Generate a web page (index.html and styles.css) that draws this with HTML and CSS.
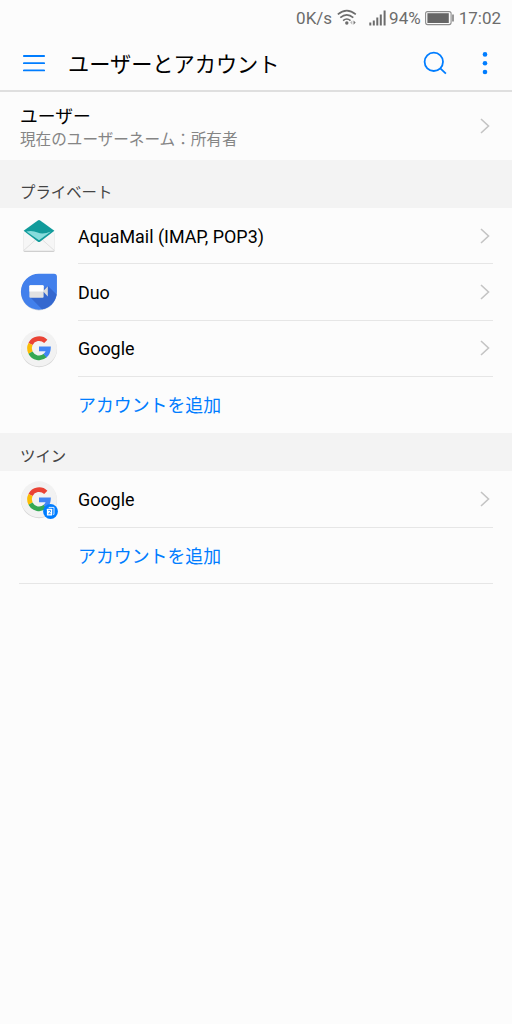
FILE: index.html
```html
<!DOCTYPE html>
<html lang="ja">
<head>
    <meta charset="UTF-8">
    <meta name="viewport" content="width=device-width, initial-scale=1.0">
    <title>ユーザーとアカウント</title>
    <link rel="stylesheet" href="styles.css">
</head>
<body>
    <!-- shared shapes -->
    <svg width="0" height="0" class="defs">
        <symbol id="chevron" viewBox="0 0 12 18">
            <path d="M2 2l7.5 7L2 16" fill="none" stroke="#c4c4c4" stroke-width="1.6"/>
        </symbol>
        <symbol id="google" viewBox="0 0 40 40">
            <circle cx="20" cy="20.2" r="18" fill="#d6d6d6"/>
            <circle cx="20" cy="19.3" r="18" fill="#f2f2f2"/>
            <g fill="none" stroke-width="4.6">
                <path d="M26.8 12.4A9.6 9.6 0 0 0 11.5 15" stroke="#ea4335"/>
                <path d="M11.5 15A9.6 9.6 0 0 0 11.5 23.6" stroke="#fbbc05"/>
                <path d="M11.5 23.6A9.6 9.6 0 0 0 26.3 26.5" stroke="#34a853"/>
                <path d="M26 26.7A9.6 9.6 0 0 0 29.4 19.9H20" stroke="#4285f4"/>
            </g>
        </symbol>
    </svg>

    <div class="status">
        <span class="speed">0K/s</span>
        <svg class="wifi" width="22" height="18" viewBox="0 0 22 18">
            <g fill="none" stroke="#6c6c6c" stroke-width="1.6">
                <path d="M.8 5.4Q9.8-2.2 18.8 5.4"/>
                <path d="M3.3 8.6Q9.8 3 16.3 8.6"/>
                <path d="M6.1 11.6Q9.8 8.4 13.5 11.6"/>
            </g>
            <circle cx="9.8" cy="14" r="1.7" fill="#6c6c6c"/>
            <path d="M15.3 11.4v4.4l-2.2-2.2z" fill="#bbb"/>
            <path d="M16.5 11.4v4.4l2.2-2.2z" fill="#777"/>
        </svg>
        <svg class="signal" width="18" height="17" viewBox="0 0 18 17">
            <path d="M1.3 12.5v3M4.8 10.5v5M8.3 7.5v8M11.8 4.5v11M15.6 .5v15" stroke="#6c6c6c" stroke-width="2"/>
        </svg>
        <span class="percent">94%</span>
        <svg class="battery" width="29" height="15" viewBox="0 0 29 15">
            <rect x=".6" y=".6" width="25.5" height="13" rx="2" fill="none" stroke="#8c8c8c" stroke-width="1.1"/>
            <rect x="2.4" y="2.2" width="21.4" height="9.8" fill="#666"/>
            <path d="M28 3.6v7" stroke="#777" stroke-width="1.5"/>
        </svg>
        <span class="time">17:02</span>
    </div>

    <header class="appbar">
        <svg class="menu" width="22" height="18" viewBox="0 0 22 18">
            <path d="M.8 2h20.4M.8 9.2h20.4M.8 16.4h20.4" stroke="#007dff" stroke-width="1.8" stroke-linecap="round"/>
        </svg>
        <h1>ユーザーとアカウント</h1>
        <svg class="search" width="24" height="24" viewBox="0 0 24 24">
            <g fill="none" stroke="#007dff" stroke-width="1.8">
                <circle cx="10.8" cy="10.8" r="9.2"/>
                <path d="M17.3 17.3l5.6 5.4"/>
            </g>
        </svg>
        <svg class="more" width="6" height="24" viewBox="0 0 6 24">
            <g fill="#007dff">
                <circle cx="3" cy="3.4" r="2.3"/>
                <circle cx="3" cy="12.2" r="2.3"/>
                <circle cx="3" cy="21" r="2.3"/>
            </g>
        </svg>
    </header>

    <main>
        <div class="user">
            <div class="user-text">
                <p class="user-title">ユーザー</p>
                <p class="user-sub">現在のユーザーネーム：所有者</p>
            </div>
            <svg class="chevron"><use href="#chevron"/></svg>
        </div>

        <h2 class="private">プライベート</h2>
        <ul>
            <li>
                <svg class="icon" viewBox="0 0 40 40">
                    <path d="M4.4 17h31.2v17.4q0 1.6-1.6 1.6H6q-1.6 0-1.6-1.6z" fill="#cfcfcf"/>
                    <path d="M4.4 15.2h31.2v18q0 1.6-1.6 1.6H6q-1.6 0-1.6-1.6z" fill="#f6f6f6"/>
                    <path d="M5 34.2L16.6 23.8M35 34.2L23.4 23.8" stroke="#dcdcdc" stroke-width=".9"/>
                    <path d="M4.6 14.7L18.8 4.4q1.2-.8 2.4 0l14.2 10.3L21.4 25.4q-1.4 1-2.8 0z" fill="#119b9b"/>
                    <path d="M7.4 15.6q6-1.4 11.2 1t13.4-1L20 24.2z" fill="#86dcdc"/>
                </svg>
                <div class="line"><span>AquaMail (IMAP, POP3)</span><svg class="chevron"><use href="#chevron"/></svg></div>
            </li>
            <li>
                <svg class="icon" viewBox="0 0 40 40">
                    <path d="M20 2.4h15q2.9 0 2.9 2.9v15.1a18 18 0 1 1-17.9-18z" fill="#c7cfdd"/>
                    <path d="M20 1.7h15q2.9 0 2.9 2.9v15.1A18 18 0 1 1 20 1.7z" fill="#4280ec"/>
                    <path d="M11.5 25.6L23 37.3A18 18 0 0 0 37.6 22.5L29 14z" fill="#3568cf"/>
                    <path d="M24 19.3l4.8-5.1v10.4z" fill="#dcdcdc"/>
                    <rect x="10.4" y="13.2" width="14.2" height="12.6" rx="1" fill="#e2e2e2"/>
                    <path d="M10.4 19.5v-5.3q0-1 1-1h12.2q1 0 1 1v5.3z" fill="#fff"/>
                </svg>
                <div class="line"><span>Duo</span><svg class="chevron"><use href="#chevron"/></svg></div>
            </li>
            <li>
                <svg class="icon"><use href="#google"/></svg>
                <div class="line"><span>Google</span><svg class="chevron"><use href="#chevron"/></svg></div>
            </li>
            <li class="add"><div class="line">アカウントを追加</div></li>
        </ul>

        <h2 class="twin">ツイン</h2>
        <ul class="twin-list">
            <li>
                <div class="icon-wrap">
                    <svg class="icon"><use href="#google"/></svg>
                    <svg class="badge" viewBox="0 0 15 15">
                        <circle cx="7.5" cy="7.5" r="7.4" fill="#007dff"/>
                        <path d="M6 4.1V3.4h5v7h-.8" fill="none" stroke="#d5e9ff" stroke-width="1"/>
                        <rect x="3.9" y="4.8" width="5.3" height="6.8" rx=".5" fill="#fff"/>
                        <path d="M5.3 6.4h2.2v1.5L5.6 9.7h2.2" fill="none" stroke="#007dff" stroke-width=".8"/>
                    </svg>
                </div>
                <div class="line"><span>Google</span><svg class="chevron"><use href="#chevron"/></svg></div>
            </li>
            <li class="add"><div class="line">アカウントを追加</div></li>
        </ul>
    </main>
</body>
</html>
```
FILE: styles.css
```css
:root {
    --blue: #007dff;
    --line: #e6e6e6;
}

* {
    margin: 0;
    padding: 0;
    box-sizing: border-box;
}

body {
    background-color: #fcfcfc;
    color: #000;
    font-family: Roboto, "Noto Sans CJK JP", sans-serif;
    font-size: 17.9px;
}

svg {
    display: block;
    flex: none;
}

.defs {
    position: absolute;
}

/* status bar */
.status {
    display: flex;
    align-items: center;
    justify-content: flex-end;
    height: 36px;
    padding-right: 11px;
    color: #6c6c6c;
    font-size: 17px;
    line-height: 36px;
}

.wifi {
    margin-left: 5px;
}

.signal {
    margin-left: 10px;
}

.percent {
    margin-left: 2px;
}

.battery {
    margin-left: 4px;
}

.time {
    margin-left: 5px;
}

/* title bar */
.appbar {
    display: flex;
    align-items: center;
    height: 56px;
    padding: 0 24px 0 23px;
    border-bottom: 2px solid #dfdfdf;
}

.appbar h1 {
    flex: 1;
    margin-left: 23px;
    padding-top: 3px;
    font-size: 21.2px;
    font-weight: 400;
    line-height: 51px;
}

.more {
    margin-left: 35px;
}

/* current user */
.user {
    display: flex;
    align-items: center;
    justify-content: space-between;
    height: 68px;
    padding: 0 21px 0 20px;
}

.user-text {
    padding-top: 3px;
}

.user-title {
    font-size: 17.8px;
    line-height: 24px;
}

.user-sub {
    color: #858585;
    font-size: 15.6px;
    line-height: 22px;
}

.chevron {
    width: 12px;
    height: 18px;
}

/* section titles */
h2 {
    padding-left: 20px;
    background-color: #f3f3f3;
    color: #444;
    font-size: 15.4px;
    font-weight: 400;
}

.private {
    height: 48px;
    padding-top: 18px;
    line-height: 30px;
}

.twin {
    height: 38px;
    padding-top: 9px;
    line-height: 31px;
}

/* accounts */
ul {
    list-style: none;
}

li {
    display: flex;
    align-items: center;
    height: 56.3px;
    padding: 0 19px;
}

.icon {
    width: 40px;
    height: 40px;
}

li > .icon,
.icon-wrap {
    margin-right: 19px;
}

.icon-wrap {
    position: relative;
}

.badge {
    position: absolute;
    right: 1px;
    bottom: 1px;
    width: 15px;
    height: 15px;
}

.line {
    display: flex;
    flex: 1;
    align-items: center;
    justify-content: space-between;
    height: 100%;
    border-bottom: 1px solid var(--line);
}

.line span {
    padding-top: 1px;
}

.line .chevron {
    margin-right: 2px;
}

.add {
    padding-left: 78px;
    color: var(--blue);
}

.add .line {
    padding-bottom: 2px;
    border-bottom: 0;
}

.twin-list {
    margin: 0 19px;
    border-bottom: 1px solid var(--line);
}

.twin-list li {
    height: 57px;
    padding-right: 0;
    padding-left: 0;
}

.twin-list .add {
    height: 55px;
    padding-left: 59px;
}
```
